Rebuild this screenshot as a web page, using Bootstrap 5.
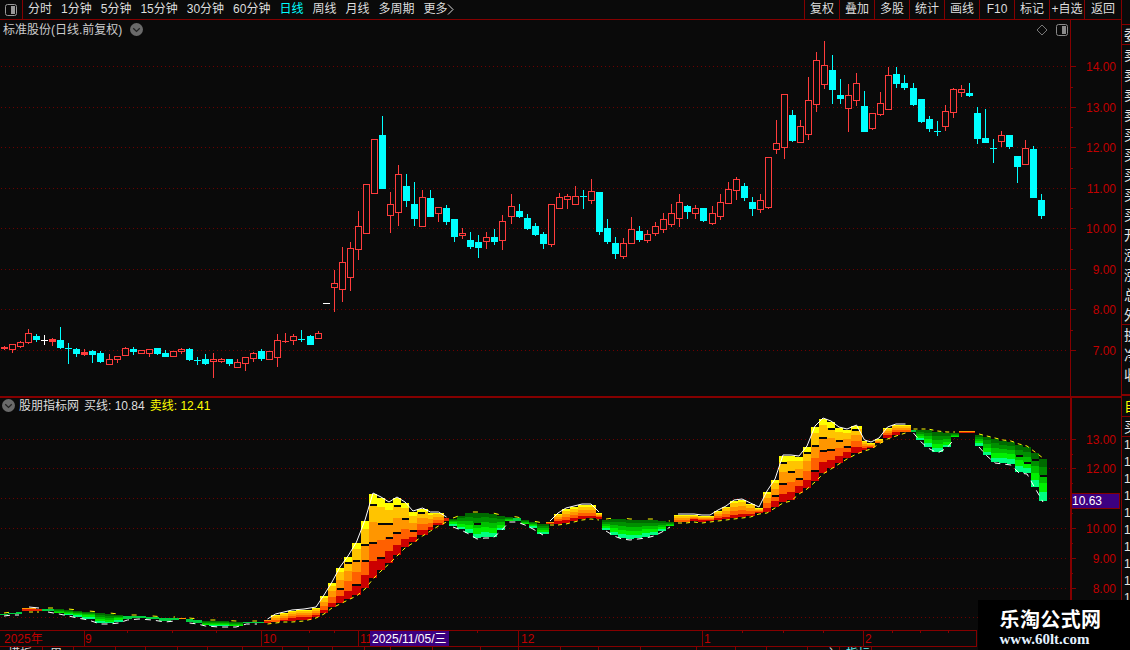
<!DOCTYPE html>
<html lang="zh">
<head>
<meta charset="utf-8">
<title>标准股份 日线</title>
<link href="https://cdn.jsdelivr.net/npm/bootstrap@5.3.0/dist/css/bootstrap.min.css" rel="stylesheet">
<style>
:root{--line:#850000;--bg:#0a0a0a}
html,body{height:650px;overflow:hidden;background:var(--bg)}
body{font:12px/1 "Liberation Sans","Noto Sans CJK SC",sans-serif;color:#ddd}
.stage{width:1130px;height:650px;overflow:hidden}
.main-col{width:1121px;flex:none}
.toolbar{height:20px;border-bottom:1px solid var(--line)}
.toggle-cell{width:23px;height:19px;border-right:1px solid var(--line)}
.period-list{gap:9px;padding-left:5px}
.period-list .nav-link{padding:0;color:#ddd;font-size:12px;line-height:19px}
.period-list .nav-link.active{color:#0ff}
.more-arrow{margin-left:-1px}
.tool-btn{width:35px;height:19px;padding:0;border:0;border-left:1px solid var(--line);border-radius:0;color:#ddd;font-size:12px;line-height:19px;background:transparent}
.tool-btn:hover{color:#fff;background:#1a0000}
.tool-end{width:37px}
.pane{background:var(--bg)}
.pane-top{height:376px}
.pane-bot{height:234px;border-top:2px solid var(--line)}
.pane svg{display:block}
.over-title{position:absolute;left:3px;top:3px;color:#ccc;line-height:12px}
.over-legend{position:absolute;left:2px;top:1px;line-height:12px}
.legend-yellow{color:#ff0}
.legend-gap{margin-left:5px}
.circle-btn{width:13px;height:13px}
.time-row{width:977px;height:17px;border:solid var(--line);border-width:1px 1px 1px 0}
.time-row svg,.tabs-row svg{display:block}
.tabs-row{height:3px;overflow:hidden}
.side-strip{width:9px;flex:none;border-left:1px solid var(--line);overflow:hidden;color:#e4e4e4;font-size:14px}
.strip-gap{height:25px;border-bottom:1px solid var(--line)}
.strip-row{height:20px;line-height:20px;padding-left:2px;white-space:nowrap}
.strip-row-boxed{height:20px;border-bottom:1px solid var(--line)}
.strip-head{height:21px;border-bottom:1px solid var(--line);color:#ff0}
.strip-break{border-bottom:1px solid var(--line)}
.strip-num{height:17px;line-height:17px;font-size:12px;padding-left:2px}
.strip-upper{height:396px;overflow:hidden;border-bottom:2px solid var(--line)}
.mark-box{position:absolute;left:978px;top:600px;width:152px;height:50px;background:#000}
.mark-name{font:700 20px/20px "Noto Sans CJK SC",sans-serif;color:#fff;letter-spacing:.4px;padding-top:9px;padding-right:7px}
.mark-url{font:700 15px/15px "Liberation Serif",serif;color:#e4f2ff;padding-top:3px;padding-right:19px}
</style>
</head>
<body>
<div class="stage d-flex position-relative">
  <div class="main-col d-flex flex-column">
    <div class="toolbar d-flex align-items-start">
      <div class="toggle-cell d-flex align-items-center justify-content-center">
        <svg width="12" height="12" viewBox="0 0 12 12"><rect x=".5" y=".5" width="11" height="11" rx="2" fill="none" stroke="#999"/><rect x="6" y="2" width="4" height="8" fill="#999"/></svg>
      </div>
      <nav class="nav period-list flex-nowrap align-items-center">
        <a class="nav-link" href="#">分时</a>
        <a class="nav-link" href="#">1分钟</a>
        <a class="nav-link" href="#">5分钟</a>
        <a class="nav-link" href="#">15分钟</a>
        <a class="nav-link" href="#">30分钟</a>
        <a class="nav-link" href="#">60分钟</a>
        <a class="nav-link active" href="#">日线</a>
        <a class="nav-link" href="#">周线</a>
        <a class="nav-link" href="#">月线</a>
        <a class="nav-link" href="#">多周期</a>
        <a class="nav-link d-flex align-items-center" href="#">更多<svg class="more-arrow" width="7" height="11" viewBox="0 0 7 11"><polyline points="1,.5 6,5.5 1,10.5" fill="none" stroke="#ddd"/></svg></a>
      </nav>
      <div class="ms-auto d-flex">
        <button class="btn tool-btn">复权</button>
        <button class="btn tool-btn">叠加</button>
        <button class="btn tool-btn">多股</button>
        <button class="btn tool-btn">统计</button>
        <button class="btn tool-btn">画线</button>
        <button class="btn tool-btn">F10</button>
        <button class="btn tool-btn">标记</button>
        <button class="btn tool-btn">+自选</button>
        <button class="btn tool-btn tool-end">返回</button>
      </div>
    </div>

    <div class="pane pane-top position-relative">
      <svg id="priceChart" width="1121" height="376" viewBox="0 20 1121 376"></svg>
      <div class="over-title d-flex align-items-center gap-2">标准股份(日线.前复权)
        <svg class="circle-btn" viewBox="0 0 12 12"><circle cx="6" cy="6" r="6" fill="#6a6a6a"/><polyline points="3,4.8 6,7.8 9,4.8" fill="none" stroke="#222" stroke-width="1.2"/></svg>
      </div>
    </div>

    <div class="pane pane-bot position-relative">
      <svg id="indicatorChart" width="1121" height="232" viewBox="0 398 1121 232"></svg>
      <div class="over-legend d-flex align-items-center">
        <svg class="circle-btn me-1" viewBox="0 0 12 12"><circle cx="6" cy="6" r="6" fill="#6a6a6a"/><polyline points="3,4.8 6,7.8 9,4.8" fill="none" stroke="#222" stroke-width="1.2"/></svg>
        <span>股朋指标网</span><span class="legend-gap">买线: 10.84</span><span class="legend-gap legend-yellow">卖线: 12.41</span>
      </div>
    </div>

    <div class="time-row"><svg id="timeAxis" width="976" height="15" viewBox="0 631 976 15"></svg></div>
    <div class="tabs-row"><svg id="tabsBar" width="1121" height="3" viewBox="0 647 1121 3"></svg></div>
  </div>

  <aside class="side-strip">
    <div class="strip-upper">
      <div class="strip-gap"></div>
      <div class="strip-row-boxed strip-row">委</div>
      <div class="strip-row">卖</div><div class="strip-row">卖</div><div class="strip-row">卖</div><div class="strip-row">卖</div>
      <div class="strip-row">买</div><div class="strip-row">买</div><div class="strip-row">买</div><div class="strip-row">买</div><div class="strip-row">买</div>
      <div class="strip-row">开</div><div class="strip-row">涨</div><div class="strip-row">涨</div><div class="strip-row">总</div>
      <div class="strip-row strip-break">外</div>
      <div class="strip-row">换</div><div class="strip-row">净</div><div class="strip-row">收</div>
    </div>
    <div class="strip-row strip-head">自</div>
    <div class="strip-row-boxed strip-row">买</div>
    <div class="strip-num">1</div><div class="strip-num">1</div><div class="strip-num">1</div><div class="strip-num">1</div><div class="strip-num">1</div><div class="strip-num">1</div><div class="strip-num">1</div><div class="strip-num">1</div><div class="strip-num">1</div><div class="strip-num">1</div>
  </aside>

  <div class="mark-box text-center">
    <div class="mark-name">乐淘公式网</div>
    <div class="mark-url">www.60lt.com</div>
  </div>
</div>

<script>
const NS='http://www.w3.org/2000/svg', LINE='#850000', TXT='#c00000', BG='#0a0a0a';
function el(p,n,a,t){const e=document.createElementNS(NS,n);for(const k in a)e.setAttribute(k,a[k]);if(t!=null)e.textContent=t;p.appendChild(e);return e}
const rect=(p,x,y,w,h,f,o)=>el(p,'rect',Object.assign({x,y,width:w,height:h,fill:f,'shape-rendering':'crispEdges'},o||{}));

/* [kind, wickTop, bodyTop, bodyBottom, wickBottom] in screen rows */
const K=[['r',346,347,348,349],['r',344,344,349,352],['r',341,342,346,347],['r',329,333,342,343],['c',334,336,339,341],['w',335,340,340,344],['R',338,339,341,345],['c',327,340,347,348],['c',343,348,348,363],['c',348,349,353,356],['R',349,352,354,355],['c',350,351,354,362],['c',351,353,361,362],['r',354,359,364,364],['r',356,356,359,362],['r',347,348,355,355],['c',347,349,351,354],['r',350,350,353,353],['r',349,349,353,356],['c',348,348,353,354],['c',350,353,356,356],['r',351,351,356,356],['r',348,349,351,353],['c',348,349,359,360],['c',357,360,360,364],['c',354,359,363,364],['r',353,359,361,377],['r',358,359,361,362],['c',359,359,363,365],['r',359,362,367,367],['r',357,357,363,370],['r',352,353,358,361],['c',349,351,358,360],['r',351,351,359,359],['r',334,340,357,366],['R',333,341,341,342],['r',334,336,340,344],['c',330,339,339,341],['c',335,336,344,344],['r',331,333,338,338],['w',303,303,303,303],
['r',270,283,287,311],['r',247,262,289,301],['r',242,248,277,290],['r',211,226,249,259],['r',184,184,233,233],['r',139,139,193,193],['c',116,135,188,188],['r',192,204,215,232],['r',165,174,212,225],['c',174,186,200,206],['c',182,204,218,225],['r',190,197,226,226],['c',190,198,216,216],['r',207,207,213,221],['c',205,208,221,224],['c',219,219,236,241],['r',228,233,235,238],['c',232,240,246,248],['c',235,242,247,257],['r',232,237,241,248],['c',229,237,241,244],['r',215,221,240,249],['r',194,206,216,223],['c',204,211,216,217],['c',214,218,228,229],['c',223,226,234,235],['c',232,234,243,248],['r',204,204,244,246],['r',193,197,208,208],['r',194,196,199,208],['r',186,196,204,204],['c',190,196,196,208],['r',179,191,200,203],['c',192,192,231,234],['c',219,228,241,243],['c',237,243,253,258],
['r',238,243,256,258],['r',217,229,243,243],['c',226,231,239,241],['r',230,234,240,242],['r',222,226,233,235],['r',213,219,229,232],['r',204,213,224,226],['r',194,202,218,226],['c',205,206,211,218],['r',205,208,213,218],['c',208,208,220,221],['r',206,213,223,224],['r',194,202,216,219],['r',182,189,203,203],['r',177,179,190,199],['c',183,186,197,200],['c',197,202,208,215],['r',194,200,209,212],['r',157,157,207,208],['r',120,143,149,153],['r',94,94,147,158],['c',110,115,140,141],['r',120,126,142,142],['r',77,100,134,139],['r',52,60,104,111],['r',41,65,84,88],['c',55,70,89,103],['c',79,95,98,103],['r',84,95,108,131],['r',73,83,100,105],['c',91,106,131,131],['r',113,113,128,129],['r',92,103,114,115],['r',67,75,109,109],['c',67,74,83,87],['c',75,83,87,89],['c',83,88,104,105],['c',99,99,121,122],['c',116,119,128,131],['c',121,131,131,135],['r',105,111,126,130],['r',88,89,112,117],['r',85,89,92,96],['c',83,93,95,96],['c',107,113,138,143],['c',109,138,142,142],['c',139,148,148,162],['r',131,135,141,146],['c',135,135,146,148],['c',156,156,166,182],['r',140,148,164,164],['c',146,149,197,197],['c',194,200,215,218]];

function drawAxis(s,priceRows,labels,y0,y1,axisW){
  rect(s,1070,y0,axisW,y1-y0,LINE);
  priceRows.forEach(y=>{
    el(s,'line',{x1:1,x2:1068,y1:y+.5,y2:y+.5,stroke:'#6e0000','stroke-dasharray':'1 3','shape-rendering':'crispEdges'});
    rect(s,1070,y,6,1,LINE);
  });
  priceRows.slice(0,-1).forEach((y,i)=>rect(s,1070,Math.round((y+priceRows[i+1])/2),3,1,LINE));
  labels.forEach(l=>el(s,'text',{x:1116,y:l[1]+4.5,'text-anchor':'end',fill:TXT,'font-size':12,'font-family':'Liberation Sans'},l[0]));
}

/* price pane */
(function(){
  const s=document.getElementById('priceChart');
  const rows=[66,107,147,188,228,269,309,350];
  const labs=['14.00','13.00','12.00','11.00','10.00','9.00','8.00','7.00'].map((t,i)=>[t,rows[i]]);
  drawAxis(s,rows,labs,20,396,1);
  K.forEach((k,i)=>{
    const cx=Math.round(4+8.04*i),[t,a,b,c,d]=k;
    const col={r:'#ff3c3c',R:'#ff3c3c',c:'#00ffff',w:'#ffffff'}[t];
    if(b===c){rect(s,cx,a,1,d-a+1,col);rect(s,cx-3,b,7,1,col);return}
    if(a<b)rect(s,cx,a,1,b-a,col);
    if(d>c)rect(s,cx,c,1,d-c+1,col);
    if(t==='r')rect(s,cx-3+.5,b+.5,6,c-b,BG,{stroke:col});
    else rect(s,cx-3,b,7,c-b+1,col);
  });
  el(s,'polygon',{points:'1042,25 1047,30 1042,35 1037,30',fill:'none',stroke:'#777'});
  el(s,'rect',{x:1056.5,y:24.5,width:11,height:11,rx:2,fill:'none',stroke:'#8a8a8a'});
  rect(s,1062,26,4,8,'#8a8a8a');
})();

/* indicator pane: stepped bands per column [x0,x1,top,bottom] */
const SEC=[
['g',[[0,8,614,615],[8,16,613,614],[16,22,612,614]]],
['r',[[22,36,608,611],[36,42,609,611]]],
['g',[[42,54,609,611],[54,64,609,613],[64,73,610,615],[73,82,611,617],[82,95,612,619],[95,105,613,623],[105,114,614,623],[114,123,615,622],[123,132,616,619],[132,146,616,618],[146,159,617,619],[159,171,618,621],[171,179,618,620]]],
['r',[[179,186,618,619]]],
['g',[[186,193,619,622],[193,202,620,623],[202,209,621,625],[209,229,621,626],[229,243,622,626],[243,250,622,623],[250,264,622,623]]],
['r',[[264,271,620,623],[271,280,615,622],[280,288,613,621],[288,296,611,621],[296,312,610,620],[312,320,608,617],[320,328,596,613],[328,336,583,607],[336,344,568,603],[344,352,557,599],[352,361,543,595],[361,369,521,588],[369,377,494,578],[377,385,498,570],[385,393,503,563],[393,401,498,555],[401,409,503,547],[409,417,512,542],[417,428,509,535],[428,433,513,530],[433,444,513,525],[444,449,518,521]]],
['g',[[449,457,519,526],[457,465,516,529],[465,473,513,533],[473,481,513,538],[481,489,513,537],[489,497,514,537],[497,505,516,530],[505,513,517,521],[513,521,518,521],[521,529,520,524],[529,537,522,528],[537,549,524,534]]],
['r',[[546,554,522,524],[554,562,514,524],[562,570,509,523],[570,578,507,521],[578,586,505,519],[586,596,505,518],[596,602,513,519]]],
['g',[[602,610,520,530],[610,618,519,535],[618,626,519,538],[626,634,520,539],[634,642,520,538],[642,650,520,537],[650,658,520,535],[658,666,521,531],[666,674,522,526]]],
['r',[[674,682,515,522],[682,690,515,522],[690,698,515,521],[698,706,516,522],[706,714,516,521],[714,722,511,520],[722,730,507,519],[730,738,501,518],[738,746,500,517],[746,755,504,516],[755,763,508,513],[763,771,492,512],[771,779,480,507],[779,787,456,502],[787,795,456,500],[795,803,457,493],[803,811,447,488],[811,819,427,481],[819,827,419,473],[827,835,422,468],[835,843,428,463],[843,851,430,458],[851,862,426,453],[862,867,441,450],[867,875,443,448],[875,883,439,443],[883,892,428,438],[892,900,425,435],[900,911,425,432]]],
['g',[[911,916,430,432],[916,924,430,440],[924,932,430,447],[932,943,432,452],[943,951,433,447],[951,959,433,437]]],
['r',[[959,975,431,433]]],
['g',[[975,983,435,446],[983,991,437,455],[991,999,439,462],[999,1007,441,463],[1007,1015,442,464],[1015,1023,445,472],[1023,1031,447,473],[1031,1039,453,487],[1039,1047,459,501]]]
];
(function(){
  const s=document.getElementById('indicatorChart');
  const rows=[439,468,498,528,558,588,617];
  const labs=[['13.00',439],['12.00',468],['10.00',528],['9.00',558],['8.00',588]];
  drawAxis(s,rows,labs,398,630,2);
  const hot=[['#ffff00',.12],['#ffc400',.22],['#ff9600',.24],['#ff6000',.23],['#cc0000',.19]];
  const cold=[['#006a00',.18],['#008f00',.2],['#00c000',.2],['#00f000',.22],['#00ff80',.2]];
  let n=0;
  SEC.forEach(([kind,cols],si)=>{
    const pal=kind==='r'?hot:cold;
    cols.forEach(([x0,x1,t,b])=>{
      const h=b-t;n++;
      if(h<4){
        const c=kind==='r'?(h>1?'#e02000':'#ff5000'):'#00d040';
        rect(s,x0,t,x1-x0,Math.max(h,1),c);
        if(kind==='r'&&x1-x0>6)rect(s,x0,t,x1-x0,1,'#ff9900');
        return;
      }
      let y=t;const edges=[];
      pal.forEach(([c,f],i)=>{
        const hh=i===4?b-y:Math.max(1,Math.round(h*f));
        rect(s,x0,y,x1-x0,hh,c);y+=hh;edges.push(y);
      });
      if(h>24){
        const e=edges[n%3];rect(s,x0+1,e,Math.min(x1-x0,8)-1,2,'#080808');
        if(h>45&&kind==='r'){const f=edges[(n+1)%3+1];rect(s,x0,f,x1-x0,2,'#080808')}
      }
    });
    const up=cols.map(c=>[(c[0]+c[1])/2,c[2]-1]), dn=cols.map(c=>[(c[0]+c[1])/2,c[3]+1]);
    const pts=a=>a.map(p=>p.join(',')).join(' ');
    const wh=kind==='r'?up:dn, ye=kind==='r'?dn:up;
    if(cols.length>1){
      const sparse=kind==='g'&&si<9;
      el(s,'polyline',{points:pts(wh),fill:'none',stroke:'#fff','stroke-width':1,'stroke-dasharray':kind==='r'?'none':'6 5'});
      el(s,'polyline',{points:pts(ye),fill:'none',stroke:'#ff0','stroke-width':1,'stroke-dasharray':sparse?'5 16':'4 4'});
    }
  });
  rect(s,1071.5,493.5,48,15,'#3c0080',{stroke:LINE});
  el(s,'text',{x:1072,y:505,fill:'#fff','font-size':12,'font-family':'Liberation Sans'},'10.63');
})();

/* time axis */
(function(){
  const s=document.getElementById('timeAxis');
  [127,172,216,309,334,477,742,783,823,892,920,948].forEach(x=>rect(s,x,631,1,2,LINE));
  [84,261,358,518,702,863].forEach(x=>rect(s,x,631,1,15,LINE));
  [['2025年',4],['9',85],['10',263],['11',360],['12',521],['1',704],['2',865]].forEach(([t,x])=>
    el(s,'text',{x,y:643,fill:TXT,'font-size':12,'font-family':'Liberation Sans, Noto Sans CJK SC'},t));
  rect(s,370,631,79,15,'#3c0080');
  el(s,'text',{x:372,y:643,fill:'#fff','font-size':12,'font-family':'Liberation Sans, Noto Sans CJK SC'},'2025/11/05/三');
})();

/* bottom tab row, only its top edge shows */
(function(){
  const s=document.getElementById('tabsBar');
  [42,73,115,145,177,207,242,282,308,332,364,390,432,480,518,560,598,640,696,735,766,807,839,871].forEach(x=>rect(s,x,647,1,3,LINE));
  [['模板',8,'#ddd'],['周',50,'#ddd'],['主',825,'#ddd'],['指标',846,'#6ee']].forEach(([t,x,c])=>
    el(s,'text',{x,y:658,fill:c,'font-size':12,'font-family':'Noto Sans CJK SC'},t));
})();
</script>
<script src="https://cdn.jsdelivr.net/npm/bootstrap@5.3.0/dist/js/bootstrap.bundle.min.js"></script>
</body>
</html>
